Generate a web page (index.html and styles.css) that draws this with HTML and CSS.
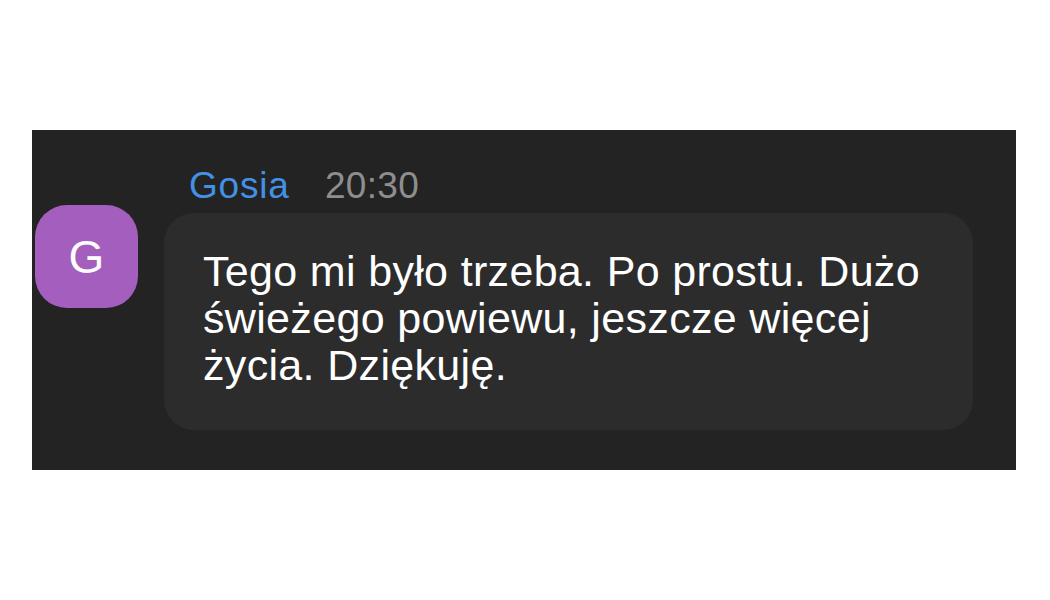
FILE: index.html
```html
<!DOCTYPE html>
<html lang="pl">
<head>
<meta charset="utf-8">
<title>Wiadomość</title>
<link rel="stylesheet" href="styles.css">
</head>
<body>
<div class="panel">
  <div class="message">
    <div class="avatar">G</div>
    <div class="content">
      <div class="header">
        <span class="name">Gosia</span>
        <span class="time">20:30</span>
      </div>
      <div class="bubble">Tego mi było trzeba. Po prostu. Dużo<br>świeżego powiewu, jeszcze więcej<br>życia. Dziękuję.</div>
    </div>
  </div>
</div>
</body>
</html>
```
FILE: styles.css
```css
html, body {
  margin: 0;
  padding: 0;
  background: #ffffff;
}

body {
  font-family: "Liberation Sans", Arial, sans-serif;
  width: 1050px;
  height: 600px;
  overflow: hidden;
}

.panel {
  box-sizing: border-box;
  margin: 130px 0 0 32px;
  width: 984px;
  height: 340px;
  background: #232323;
  padding: 34px 0 0 3px;
}

.message {
  display: flex;
  align-items: flex-start;
  gap: 26px;
}

.avatar {
  flex: none;
  width: 103px;
  height: 103px;
  margin-top: 41px;
  border-radius: 32px;
  background: #a35ebe;
  color: #ffffff;
  font-size: 46px;
  display: flex;
  align-items: center;
  justify-content: center;
}

.content {
  width: 809px;
  display: flex;
  flex-direction: column;
}

.header {
  padding-left: 25px;
  height: 44px;
  line-height: 44px;
  margin-bottom: 5px;
  font-size: 37px;
  white-space: nowrap;
}

.name {
  color: #4391e6;
  letter-spacing: 0.8px;
}

.time {
  color: #8e8e8e;
  margin-left: 25px;
  letter-spacing: 0.3px;
}

.bubble {
  background: #2c2c2c;
  border-radius: 30px;
  padding: 35px 30px 41px 39px;
  color: #ffffff;
  font-size: 43px;
  line-height: 47px;
  letter-spacing: 0.33px;
  white-space: nowrap;
}
```
